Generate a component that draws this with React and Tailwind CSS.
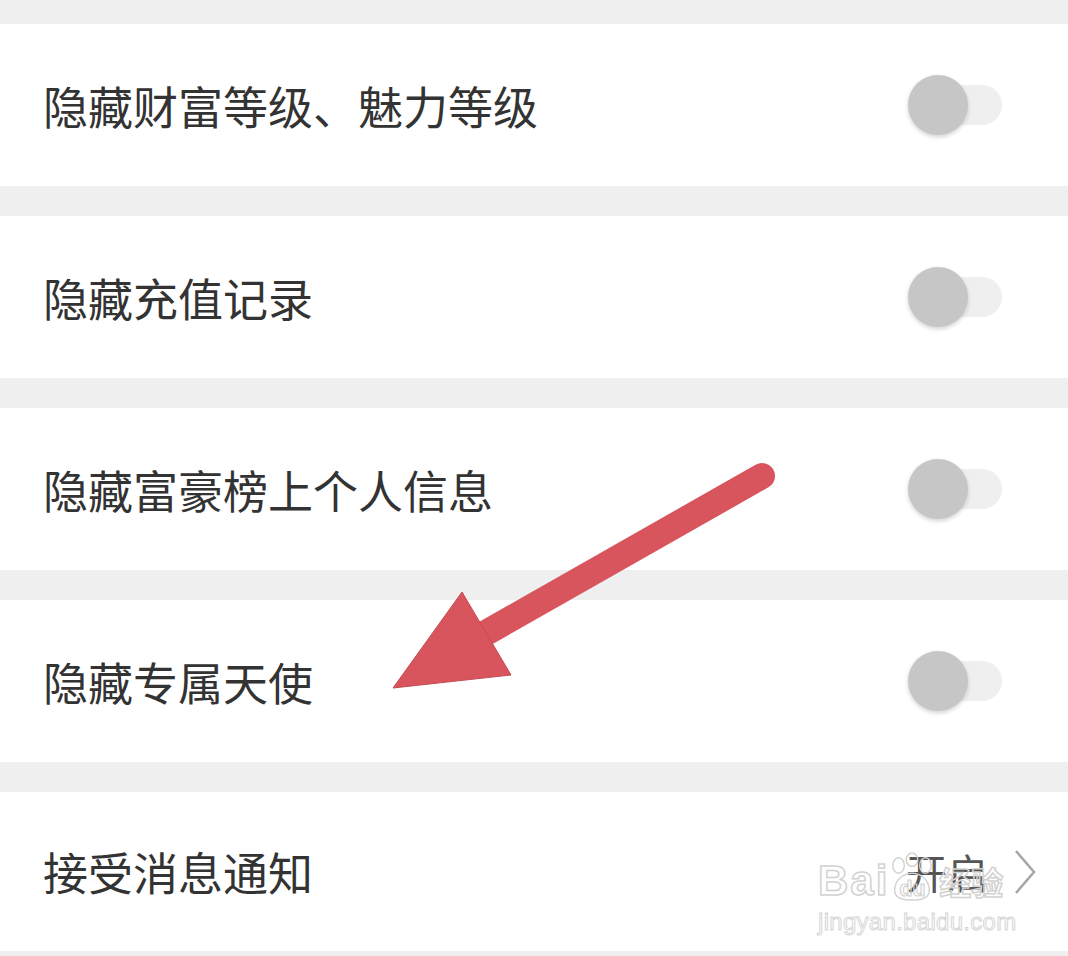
import React from "react";

const rows = [
  "隐藏财富等级、魅力等级",
  "隐藏充值记录",
  "隐藏富豪榜上个人信息",
  "隐藏专属天使",
];

const Toggle = () => (
  <div className="relative w-[96px] h-[60px] flex items-center">
    <div className="absolute left-[16px] right-[2px] h-[40px] rounded-full bg-[#efefef]" />
    <div className="relative w-[60px] h-[60px] rounded-full bg-[#c6c6c6] shadow-[0_2px_4px_rgba(0,0,0,0.18)]" />
  </div>
);

const Row = ({ label }) => (
  <div className="h-[162px] bg-white flex items-center justify-between pl-[43px] pr-[64px]">
    <span className="text-[45px] text-[#333333] leading-none">{label}</span>
    <Toggle />
  </div>
);

const Arrow = () => (
  <svg
    className="absolute left-0 top-0 pointer-events-none"
    width="1068"
    height="956"
    viewBox="0 0 1068 956"
  >
    <line
      x1="762"
      y1="476"
      x2="470"
      y2="642"
      stroke="#d9555d"
      strokeWidth="26"
      strokeLinecap="round"
    />
    <polygon
      points="462,592 393,688 511,675"
      fill="#d9555d"
      stroke="#c44a52"
      strokeWidth="1"
      strokeLinejoin="round"
    />
  </svg>
);

// baidu jingyan watermark, outline only so the value underneath shows through
const Watermark = () => (
  <div className="absolute left-[818px] top-[852px] pointer-events-none text-transparent [-webkit-text-stroke:1.5px_#d2d2d2] font-['Liberation_Sans','Noto_Sans_CJK_SC',sans-serif]">
    <div className="flex items-end leading-none">
      <span className="text-[42px] font-bold tracking-[2px]">Bai</span>
      <svg width="50" height="50" viewBox="0 0 52 52" className="-ml-[2px]">
        <g fill="none" stroke="#d2d2d2" strokeWidth="1.5">
          <ellipse cx="12" cy="14" rx="6" ry="8" />
          <ellipse cx="26" cy="8" rx="6" ry="7" />
          <ellipse cx="40" cy="14" rx="6" ry="8" />
          <path d="M8 40 C8 28 18 22 26 22 C34 22 44 28 44 40 C44 48 36 50 26 50 C16 50 8 48 8 40 Z" />
        </g>
        <text x="13" y="46" fontSize="22" fontWeight="bold" fill="none" stroke="#d2d2d2" strokeWidth="1.2" fontFamily="Liberation Sans">du</text>
      </svg>
      <span className="text-[32px] font-bold ml-[2px] mb-[2px]">经验</span>
    </div>
    <div className="text-[24px] leading-none mt-[8px] tracking-[0.3px] [-webkit-text-stroke:1px_#d6d6d6]">jingyan.baidu.com</div>
  </div>
);

export default function App() {
  return (
    <div className="relative w-[1068px] h-[956px] bg-[#efefef] overflow-hidden font-['Noto_Sans_CJK_SC','Noto_Sans',sans-serif]">
      <div className="flex flex-col gap-[30px] pt-[24px]">
        {rows.map((r) => (
          <Row key={r} label={r} />
        ))}
        <div className="h-[159px] bg-white flex items-center justify-between pl-[43px] pr-[32px]">
          <span className="text-[45px] text-[#333333] leading-none">接受消息通知</span>
          <div className="flex items-center gap-[26px]">
            <span className="text-[41px] text-[#555555] leading-none">开启</span>
            <svg width="22" height="46" viewBox="0 0 22 46">
              <path d="M2 2 L20 23 L2 44" fill="none" stroke="#a6a6a6" strokeWidth="2.5" />
            </svg>
          </div>
        </div>
      </div>
      <Watermark />
      <Arrow />
    </div>
  );
}
